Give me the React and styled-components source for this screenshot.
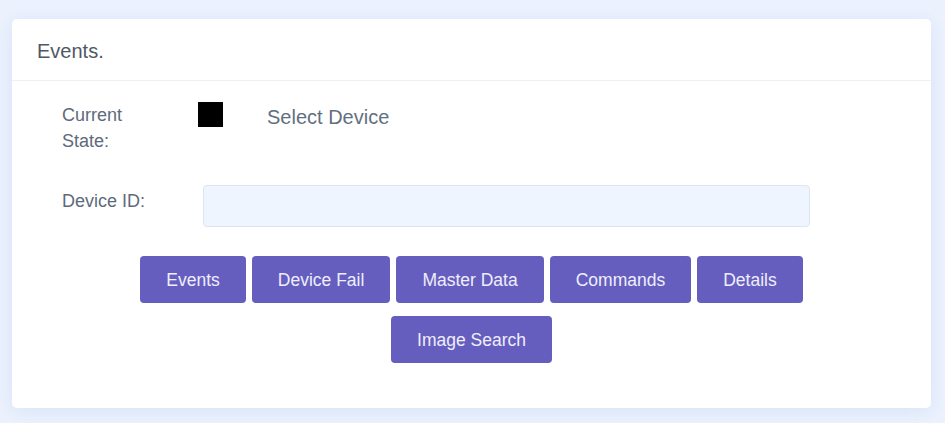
import React from 'react'
import styled, { createGlobalStyle } from 'styled-components'

const GlobalStyle = createGlobalStyle`
  html, body {
    margin: 0;
    padding: 0;
    background: #ecf2fd;
    font-family: "Liberation Sans", Arial, sans-serif;
  }
`

const Page = styled.div`
  padding: 19px 14px 15px 12px;
`

const Card = styled.div`
  background: #fff;
  border-radius: 5px;
  box-shadow: 0 3px 18px rgba(120, 160, 230, 0.18);
`

const Header = styled.div`
  height: 62px;
  box-sizing: border-box;
  display: flex;
  align-items: center;
  padding: 3px 25px 0;
  border-bottom: 1px solid #edf1f7;
  font-size: 20px;
  color: #4f5864;
`

const Body = styled.div`
  padding: 21px 50px 45px;
`

const Row = styled.div`
  display: flex;
  align-items: flex-start;
  margin-bottom: ${({ gap }) => gap || 0}px;
`

const Label = styled.div`
  width: ${({ width }) => width}px;
  flex-shrink: 0;
  font-size: 18px;
  line-height: 26px;
  color: #5e6a7b;
  padding-top: ${({ top }) => top || 0}px;
`

const StateBox = styled.div`
  width: 25px;
  height: 25px;
  background: #000;
`

const StateText = styled.div`
  margin-left: 44px;
  padding-top: 2px;
  font-size: 20px;
  line-height: 26px;
  color: #636f80;
`

const Input = styled.input`
  width: 607px;
  height: 42px;
  box-sizing: border-box;
  background: #eef5fe;
  border: 1px solid #dde5f1;
  border-radius: 4px;
  outline: none;
  margin-top: -1px;
`

const Buttons = styled.div`
  display: flex;
  flex-wrap: wrap;
  justify-content: center;
  gap: 13px 6px;
  max-width: 720px;
  margin: 29px auto 0;
`

const Button = styled.button`
  height: 47px;
  padding: 1px 26px 0;
  border: none;
  border-radius: 4px;
  background: #665ebe;
  color: #eeeefc;
  font-family: "Liberation Sans", Arial, sans-serif;
  font-size: 17.5px;
  cursor: pointer;
`

const actions = ['Events', 'Device Fail', 'Master Data', 'Commands', 'Details', 'Image Search']

export default function App () {
  return (
    <>
      <GlobalStyle />
      <Page>
        <Card>
          <Header>Events.</Header>
          <Body>
            <Row gap={32}>
              <Label width={136}>Current<br />State:</Label>
              <StateBox />
              <StateText>Select Device</StateText>
            </Row>
            <Row>
              <Label width={141} top={2}>Device ID:</Label>
              <Input />
            </Row>
            <Buttons>
              {actions.map(a => <Button key={a}>{a}</Button>)}
            </Buttons>
          </Body>
        </Card>
      </Page>
    </>
  )
}
